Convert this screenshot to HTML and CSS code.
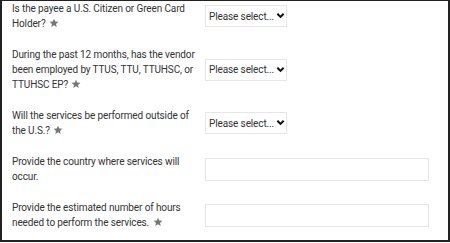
FILE: index.html
```html
<!DOCTYPE html>
<html>
<head>
<meta charset="utf-8">
<link rel="stylesheet" href="styles.css">
</head>
<body>
<div class="frame">
  <div class="row">
    <div class="label">Is the payee a U.S. Citizen or Green Card Holder? <svg class="star" viewBox="0 0 24 24"><path d="M12 1.5l3 7.1 7.6.6-5.8 5 1.8 7.4L12 17.6l-6.6 4 1.8-7.4-5.8-5 7.6-.6z"/></svg></div>
    <div class="sel"><select><option>Please select...</option></select><svg class="chev" viewBox="0 0 10 10"><path d="M1.5 3L5 6.5 8.5 3"/></svg></div>
  </div>
  <div class="row">
    <div class="label">During the past 12 months, has the vendor been employed by TTUS, TTU, TTUHSC, or TTUHSC EP? <svg class="star" viewBox="0 0 24 24"><path d="M12 1.5l3 7.1 7.6.6-5.8 5 1.8 7.4L12 17.6l-6.6 4 1.8-7.4-5.8-5 7.6-.6z"/></svg></div>
    <div class="sel"><select><option>Please select...</option></select><svg class="chev" viewBox="0 0 10 10"><path d="M1.5 3L5 6.5 8.5 3"/></svg></div>
  </div>
  <div class="row">
    <div class="label">Will the services be performed outside of the U.S.? <svg class="star" viewBox="0 0 24 24"><path d="M12 1.5l3 7.1 7.6.6-5.8 5 1.8 7.4L12 17.6l-6.6 4 1.8-7.4-5.8-5 7.6-.6z"/></svg></div>
    <div class="sel"><select><option>Please select...</option></select><svg class="chev" viewBox="0 0 10 10"><path d="M1.5 3L5 6.5 8.5 3"/></svg></div>
  </div>
  <div class="row">
    <div class="label">Provide the country where services will occur.</div>
    <input class="txt" type="text">
  </div>
  <div class="row">
    <div class="label">Provide the estimated number of hours needed to perform the services. <svg class="star" viewBox="0 0 24 24"><path d="M12 1.5l3 7.1 7.6.6-5.8 5 1.8 7.4L12 17.6l-6.6 4 1.8-7.4-5.8-5 7.6-.6z"/></svg></div>
    <input class="txt" type="text">
  </div>
</div>
</body>
</html>
```

FILE: styles.css
```css
html, body {
  margin: 0;
  padding: 0;
  background: #fff;
}
.frame {
  box-sizing: border-box;
  width: 450px;
  height: 242px;
  border-top: 1px solid #222;
  border-left: 2px solid #222;
  border-right: 2px solid #222;
  border-bottom: 2px solid #222;
  padding: 0 0 0 10px;
  font-family: Roboto, "Liberation Sans", sans-serif;
  font-size: 10px;
  letter-spacing: -0.12px;
  line-height: 15px;
  color: #333;
  display: flex;
  flex-direction: column;
  gap: 16px;
}
.row {
  display: flex;
  align-items: center;
  gap: 5px;
}
.label {
  width: 188px;
  flex: none;
}
.star {
  width: 10px;
  height: 10px;
  fill: #777;
  vertical-align: -1px;
  margin-left: 1px;
}
.sel {
  position: relative;
  width: 82px;
  height: 22px;
  flex: none;
}
.sel select {
  appearance: none;
  -webkit-appearance: none;
  box-sizing: border-box;
  width: 100%;
  height: 100%;
  border: 1px solid #e6e6e6;
  border-radius: 0;
  background: #fff;
  font-family: Roboto, "Liberation Sans", sans-serif;
  font-size: 10px;
  letter-spacing: -0.12px;
  color: #333;
  padding: 0 0 0 3px;
  margin: 0;
}
.chev {
  position: absolute;
  right: 2px;
  top: 6px;
  width: 9px;
  height: 9px;
  fill: none;
  stroke: #111;
  stroke-width: 2.2;
}
.txt {
  box-sizing: border-box;
  width: 224px;
  height: 23px;
  border: 1px solid #e6e6e6;
  border-radius: 0;
  margin: 0;
  padding: 0;
  flex: none;
}
```
